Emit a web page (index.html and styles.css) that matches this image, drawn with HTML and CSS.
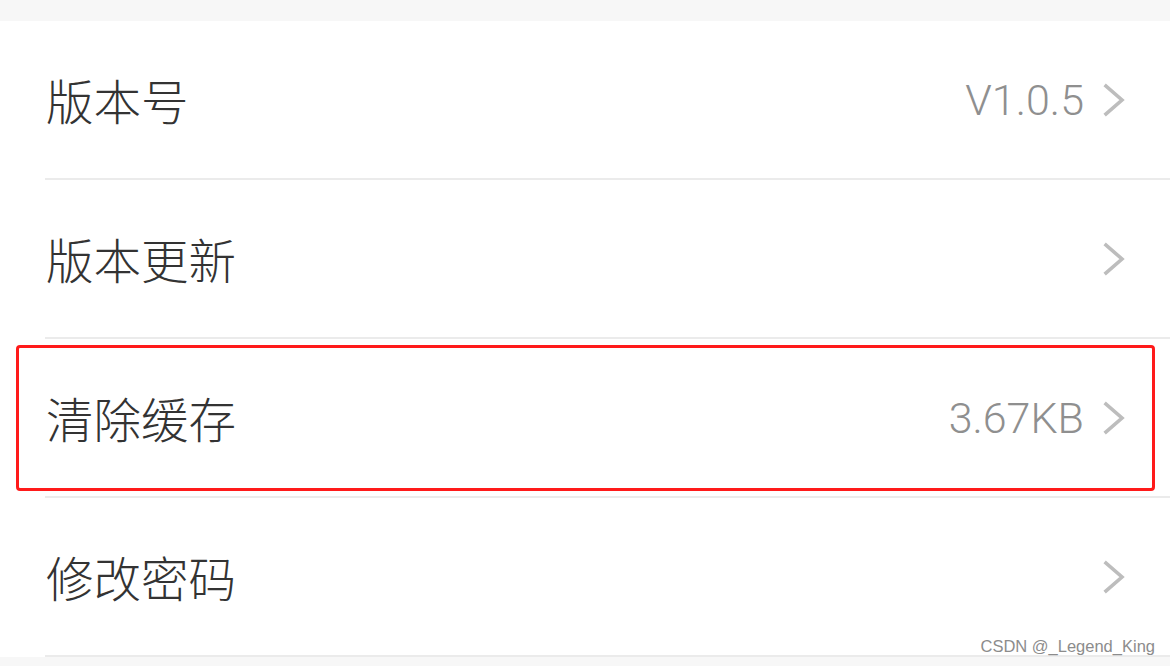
FILE: index.html
```
<!DOCTYPE html>
<html lang="zh-CN">
<head>
<meta charset="utf-8">
<title>设置</title>
<link rel="stylesheet" href="styles.css">
</head>
<body>
<div class="page">
  <div class="top-band"></div>
  <ul class="list">
    <li class="row">
      <span class="label">版本号</span>
      <span class="right"><span class="value">V1.0.5</span><svg class="chev" viewBox="0 0 22 34" width="22" height="34"><polyline points="3,3 19,17 3,31"/></svg></span>
    </li>
    <li class="row">
      <span class="label">版本更新</span>
      <span class="right"><svg class="chev" viewBox="0 0 22 34" width="22" height="34"><polyline points="3,3 19,17 3,31"/></svg></span>
    </li>
    <li class="row">
      <span class="label">清除缓存</span>
      <span class="right"><span class="value">3.67KB</span><svg class="chev" viewBox="0 0 22 34" width="22" height="34"><polyline points="3,3 19,17 3,31"/></svg></span>
    </li>
    <li class="row">
      <span class="label">修改密码</span>
      <span class="right"><svg class="chev" viewBox="0 0 22 34" width="22" height="34"><polyline points="3,3 19,17 3,31"/></svg></span>
    </li>
  </ul>
  <div class="bottom-band"></div>
  <div class="highlight"></div>
  <div class="watermark">CSDN @_Legend_King</div>
</div>
</body>
</html>
```

FILE: styles.css
```
html, body {
  margin: 0;
  padding: 0;
  background: #ffffff;
}
.page {
  position: relative;
  width: 1170px;
  height: 666px;
  overflow: hidden;
  font-family: "Noto Sans CJK SC", "Noto Sans", sans-serif;
}
.top-band {
  height: 21px;
  background: #f7f7f7;
}
.list {
  list-style: none;
  margin: 0;
  padding: 0 0 0 45px;
}
.row {
  display: flex;
  align-items: center;
  justify-content: space-between;
  height: 157px;
  border-bottom: 2px solid #ebebeb;
  padding-right: 45px;
}
.label {
  font-size: 47.5px;
  font-weight: 300;
  color: #333333;
  padding-left: 1px;
  line-height: 1;
}
.right {
  display: flex;
  align-items: center;
  gap: 19px;
}
.value {
  font-family: Roboto, "Liberation Sans", sans-serif;
  font-size: 43px;
  font-weight: 300;
  color: #8f8f8f;
  line-height: 1;
  padding-top: 2px;
}
.chev {
  display: block;
}
.chev polyline {
  fill: none;
  stroke: #bdbdbd;
  stroke-width: 3.6;
  stroke-linecap: square;
  stroke-linejoin: miter;
}
.bottom-band {
  height: 20px;
  background: #f7f7f7;
}
.highlight {
  position: absolute;
  left: 16px;
  top: 345px;
  width: 1133px;
  height: 140px;
  border: 3px solid #ff1a1a;
  border-radius: 4px;
}
.watermark {
  position: absolute;
  right: 15px;
  top: 637px;
  font-family: "Liberation Sans", Arial, sans-serif;
  font-size: 16.5px;
  color: #8c8c8c;
  text-shadow: 0 0 2px #ffffff;
}
```
